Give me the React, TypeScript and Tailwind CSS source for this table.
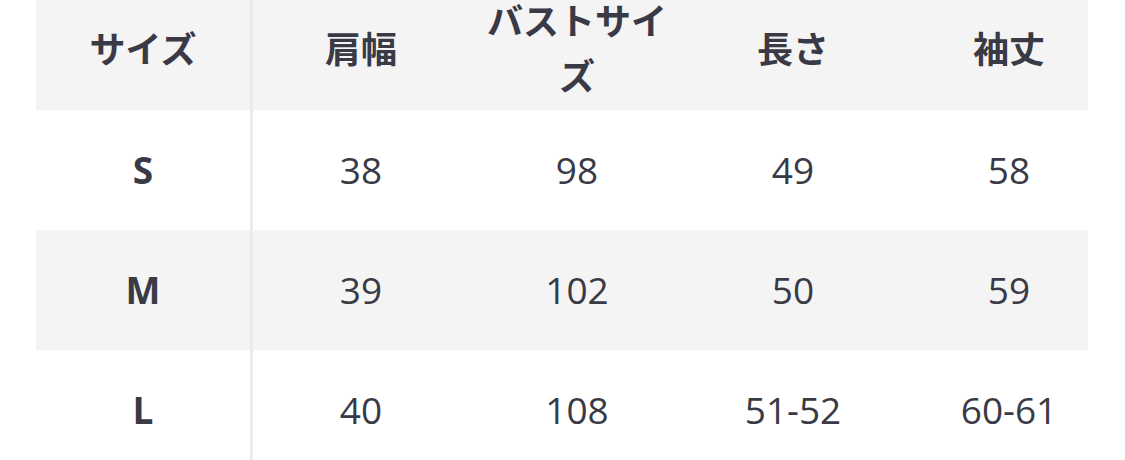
import React from 'react';

const headers = ['肩幅', 'バストサイズ', '長さ', '袖丈'];

const rows = [
  { size: 'S', values: ['38', '98', '49', '58'] },
  { size: 'M', values: ['39', '102', '50', '59'] },
  { size: 'L', values: ['40', '108', '51-52', '60-61'] },
];

const font = { fontFamily: '"Open Sans", "Noto Sans CJK JP", sans-serif' };

export default function App() {
  return (
    <div className="w-[1125px] h-[460px] bg-white overflow-hidden text-[#393a46]" style={font}>
      <div className="pl-[36px]">
        {/* Header row */}
        <div className="flex w-[1052px] h-[110px] bg-[#f4f4f4]">
          <div className="w-[214px] shrink-0 flex items-center justify-center pb-[12px] text-[36px] leading-[55px] font-bold">
            サイズ
          </div>
          {headers.map((h, i) => (
            <div
              key={h}
              className={
                i === 0
                  ? 'w-[219px] shrink-0 border-l-[3px] border-[#ebebeb] flex items-center justify-center px-3 pb-[12px] text-center text-[36px] leading-[55px] font-bold'
                  : 'w-[216px] shrink-0 flex items-center justify-center px-3 pb-[12px] text-center text-[36px] leading-[55px] font-bold'
              }
            >
              {h}
            </div>
          ))}
        </div>

        {/* Body rows */}
        {rows.map((r, idx) => (
          <div
            key={r.size}
            className={
              idx % 2 === 1
                ? 'flex w-[1052px] h-[120px] bg-[#f4f4f4]'
                : 'flex w-[1052px] h-[120px] bg-white'
            }
          >
            <div className="w-[214px] shrink-0 flex items-center justify-center text-[37px] font-bold">
              {r.size}
            </div>
            {r.values.map((v, i) => (
              <div
                key={i}
                className={
                  i === 0
                    ? 'w-[219px] shrink-0 border-l-[3px] border-[#ebebeb] flex items-center justify-center text-[37px]'
                    : 'w-[216px] shrink-0 flex items-center justify-center text-[37px]'
                }
              >
                {v}
              </div>
            ))}
          </div>
        ))}
      </div>
    </div>
  );
}
